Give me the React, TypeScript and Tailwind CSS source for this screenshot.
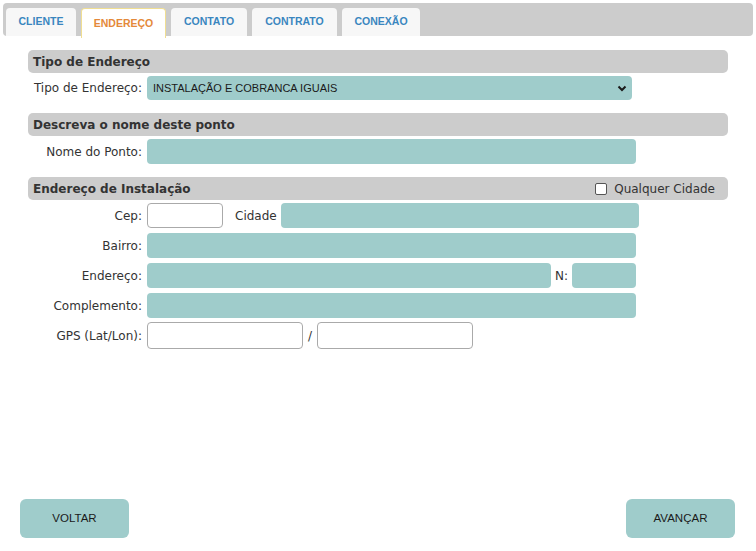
import React from "react";

const tabs = ["CLIENTE", "ENDEREÇO", "CONTATO", "CONTRATO", "CONEXÃO"];

const tabWidths: Record<string, string> = {
  CLIENTE: "w-[70px]",
  "ENDEREÇO": "w-[85px]",
  CONTATO: "w-[76px]",
  CONTRATO: "w-[85px]",
  "CONEXÃO": "w-[78px]",
};

function SectionHeader({ title, children }: { title: string; children?: React.ReactNode }) {
  return (
    <div className="flex h-[23px] items-center justify-between rounded-[5px] bg-[#cccccc] pl-[5px] pr-[13px]">
      <span className="text-[12px] font-bold text-[#333333]">{title}</span>
      {children}
    </div>
  );
}

function Label({ children }: { children: React.ReactNode }) {
  return <span className="w-[119px] shrink-0 pr-[5px] text-right text-[12px] text-[#333333]">{children}</span>;
}

export default function App() {
  return (
    <div
      className="flex h-[551px] w-[756px] flex-col justify-between bg-white"
      style={{ fontFamily: '"DejaVu Sans", Verdana, sans-serif' }}
    >
      <div>
        <div className="pt-[3px] pl-[3px] pr-[3px]">
          <div className="flex h-[33px] items-end gap-[5px] rounded-[4px] bg-[#cccccc] pl-[3px]">
            {tabs.map((t) => {
              const active = t === "ENDEREÇO";
              return (
                <div
                  key={t}
                  className={`${tabWidths[t]} flex items-center justify-center rounded-t-[4px] ${
                    active
                      ? "mb-[-2px] h-[30px] border border-b-0 border-[#f0de92] bg-white text-[#e4893a]"
                      : "h-[28px] bg-[#f7f7f7] text-[#3a86bf]"
                  }`}
                  style={{ fontFamily: '"Liberation Sans", Arial, sans-serif' }}
                >
                  <span className="text-[10.5px] font-bold">{t}</span>
                </div>
              );
            })}
          </div>
        </div>

        <div className="mt-[14px] ml-[28px] w-[700px]">
          <SectionHeader title="Tipo de Endereço" />
          <div className="mt-[3px] flex items-center">
            <Label>Tipo de Endereço:</Label>
            <div className="flex h-[24px] w-[485px] items-center justify-between rounded-[4px] bg-[#9fcccb] pl-[6px] pr-[4px]">
              <span className="text-[11px] text-[#1a1a1a]" style={{ fontFamily: '"Liberation Sans", Arial, sans-serif' }}>
                INSTALAÇÃO E COBRANCA IGUAIS
              </span>
              <svg width="12" height="12" viewBox="0 0 12 12">
                <path d="M2.5 4.5 L6 8 L9.5 4.5" fill="none" stroke="#1a1a1a" strokeWidth="2" />
              </svg>
            </div>
          </div>

          <div className="mt-[13px]">
            <SectionHeader title="Descreva o nome deste ponto" />
          </div>
          <div className="mt-[3px] flex items-center">
            <Label>Nome do Ponto:</Label>
            <div className="h-[25px] w-[489px] rounded-[4px] bg-[#9fcccb]" />
          </div>

          <div className="mt-[13px]">
            <SectionHeader title="Endereço de Instalação">
              <label className="flex items-center gap-[7px] text-[12px] text-[#333333]">
                <span className="h-[12px] w-[12px] rounded-[2px] border border-[#555555] bg-white" />
                Qualquer Cidade
              </label>
            </SectionHeader>
          </div>

          <div className="mt-[3px] flex items-center">
            <Label>Cep:</Label>
            <div className="h-[25px] w-[76px] rounded-[4px] border border-[#aaaaaa] bg-white" />
            <span className="ml-[12px] mr-[4px] text-[12px] text-[#333333]">Cidade</span>
            <div className="h-[25px] w-[358px] rounded-[4px] bg-[#9fcccb]" />
          </div>

          <div className="mt-[5px] flex items-center">
            <Label>Bairro:</Label>
            <div className="h-[25px] w-[489px] rounded-[4px] bg-[#9fcccb]" />
          </div>

          <div className="mt-[5px] flex items-center">
            <Label>Endereço:</Label>
            <div className="h-[25px] w-[404px] rounded-[4px] bg-[#9fcccb]" />
            <span className="ml-[4px] mr-[4px] text-[12px] text-[#333333]">N:</span>
            <div className="h-[25px] w-[64px] rounded-[4px] bg-[#9fcccb]" />
          </div>

          <div className="mt-[5px] flex items-center">
            <Label>Complemento:</Label>
            <div className="h-[25px] w-[489px] rounded-[4px] bg-[#9fcccb]" />
          </div>

          <div className="mt-[4px] flex items-center">
            <Label>GPS (Lat/Lon):</Label>
            <div className="h-[27px] w-[156px] rounded-[4px] border border-[#aaaaaa] bg-white" />
            <span className="w-[14px] text-center text-[12px] text-[#333333]">/</span>
            <div className="h-[27px] w-[156px] rounded-[4px] border border-[#aaaaaa] bg-white" />
          </div>
        </div>
      </div>

      <div
        className="mb-[13px] flex justify-between pl-[20px] pr-[21px]"
        style={{ fontFamily: '"Liberation Sans", Arial, sans-serif' }}
      >
        <button className="h-[39px] w-[109px] rounded-[6px] bg-[#9fcccb] text-[11.5px] text-[#1a1a1a]">VOLTAR</button>
        <button className="h-[39px] w-[109px] rounded-[6px] bg-[#9fcccb] text-[11.5px] text-[#1a1a1a]">AVANÇAR</button>
      </div>
    </div>
  );
}
